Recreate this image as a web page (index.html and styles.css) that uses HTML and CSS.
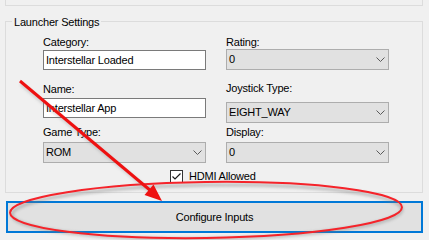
FILE: index.html
```html
<!DOCTYPE html>
<html>
<head>
<meta charset="utf-8">
<link rel="stylesheet" href="styles.css">
</head>
<body>
<div class="topbox"></div>
<fieldset class="group">
  <legend class="group-title">Launcher Settings</legend>
  <div class="group-body">
    <div class="cols">
      <div class="col">
        <div class="lbl l1">Category:</div>
        <div class="textbox t1">Interstellar Loaded</div>
        <div class="lbl l2">Name:</div>
        <div class="textbox t2">Interstellar App</div>
        <div class="lbl l3">Game Type:</div>
        <div class="combo c3"><span>ROM</span><svg class="chev" width="9" height="5" viewBox="0 0 9 5"><path d="M0.5 0.5 L4.5 4.5 L8.5 0.5" fill="none" stroke="#5a5a5a" stroke-width="1"/></svg></div>
      </div>
      <div class="col">
        <div class="lbl r1">Rating:</div>
        <div class="combo rc1"><span>0</span><svg class="chev" width="9" height="5" viewBox="0 0 9 5"><path d="M0.5 0.5 L4.5 4.5 L8.5 0.5" fill="none" stroke="#5a5a5a" stroke-width="1"/></svg></div>
        <div class="lbl r2">Joystick Type:</div>
        <div class="combo rc2"><span>EIGHT_WAY</span><svg class="chev" width="9" height="5" viewBox="0 0 9 5"><path d="M0.5 0.5 L4.5 4.5 L8.5 0.5" fill="none" stroke="#5a5a5a" stroke-width="1"/></svg></div>
        <div class="lbl r3">Display:</div>
        <div class="combo rc3"><span>0</span><svg class="chev" width="9" height="5" viewBox="0 0 9 5"><path d="M0.5 0.5 L4.5 4.5 L8.5 0.5" fill="none" stroke="#5a5a5a" stroke-width="1"/></svg></div>
      </div>
    </div>
    <div class="checkrow">
      <span class="checkbox"><svg width="11" height="11" viewBox="0 0 11 11"><path d="M1.5 5.5 L4 8 L9.5 2.5" fill="none" stroke="#1a1a1a" stroke-width="1.2"/></svg></span>
      <span class="checklabel">HDMI Allowed</span>
    </div>
  </div>
</fieldset>
<div class="button">Configure Inputs</div>
<svg class="annot" width="429" height="240" viewBox="0 0 429 240">
  <defs>
    <filter id="sh" x="-10%" y="-50%" width="120%" height="200%">
      <feGaussianBlur stdDeviation="1.5"/>
    </filter>
  </defs>
  <ellipse cx="207" cy="212" rx="195" ry="27" fill="none" stroke="#7a7a7a" stroke-width="3" opacity="0.45" filter="url(#sh)" transform="rotate(-0.8 207 212)"/>
  <ellipse cx="206" cy="210" rx="196" ry="28" fill="none" stroke="#f5232a" stroke-width="2" transform="rotate(-0.8 206 210)"/>
  <line x1="21" y1="84" x2="152" y2="193" stroke="#888" stroke-width="3" opacity="0.35" filter="url(#sh)"/>
  <line x1="20" y1="81" x2="151" y2="191" stroke="#ee1111" stroke-width="3"/>
  <polygon points="162,201 144.5,195 153.5,184.5" fill="#ee1111"/>
</svg>
</body>
</html>
```
FILE: styles.css
```css
html, body {
  margin: 0;
  padding: 0;
}
body {
  position: relative;
  width: 429px;
  height: 240px;
  overflow: hidden;
  background: #f0f0f0;
  font-family: "Liberation Sans", Arial, sans-serif;
  font-size: 11px;
  letter-spacing: -0.2px;
  color: #000;
}
.topbox {
  box-sizing: border-box;
  height: 6px;
  margin: 0 6px 0 5px;
  border: 1px solid #dcdcdc;
  border-top: none;
}
.group {
  box-sizing: border-box;
  margin: 8px 6px 0 5px;
  padding: 0;
  border: 1px solid #dcdcdc;
  min-width: 0;
}
.group-title {
  margin-left: 6px;
  padding: 2px 2px 0 2px;
  line-height: 13px;
}
.group-body {
  padding: 7px 0 9px 37px;
}
.cols {
  display: flex;
  gap: 20px;
}
.col {
  width: 163px;
  display: flex;
  flex-direction: column;
}
.lbl {
  line-height: 13px;
  height: 13px;
  white-space: nowrap;
}
.textbox {
  box-sizing: border-box;
  height: 20px;
  line-height: 18px;
  padding-left: 2px;
  background: #fff;
  border: 1px solid #7a7a7a;
  white-space: nowrap;
  overflow: hidden;
}
.combo {
  box-sizing: border-box;
  height: 21px;
  display: flex;
  align-items: center;
  justify-content: space-between;
  padding-left: 2px;
  background: #e1e1e1;
  border: 1px solid #adadad;
  white-space: nowrap;
}
.combo span {
  line-height: 13px;
}
.chev {
  display: block;
  margin-right: 3px;
}
.t1 { margin-top: 1px; }
.l2 { margin-top: 13px; }
.t2 { margin-top: 2px; }
.l3 { margin-top: 8px; }
.c3 { margin-top: 3px; }
.rc1 { margin-top: 0; }
.r2 { margin-top: 12px; }
.rc2 { margin-top: 7px; }
.r3 { margin-top: 3px; }
.rc3 { margin-top: 3px; }
.checkrow {
  display: flex;
  align-items: center;
  gap: 6px;
  margin-top: 7px;
  margin-left: 127px;
  height: 13px;
}
.checkbox {
  box-sizing: border-box;
  width: 13px;
  height: 13px;
  border: 1px solid #333;
  background: #fff;
  display: block;
}
.checkbox svg {
  display: block;
}
.checklabel {
  line-height: 13px;
}
.button {
  box-sizing: border-box;
  margin: 8px 6px 0 6px;
  height: 32px;
  border: 2px solid #0078d7;
  background: #e1e1e1;
  display: flex;
  align-items: center;
  justify-content: center;
  line-height: 13px;
  padding-top: 1px;
}
.annot {
  position: absolute;
  left: 0;
  top: 0;
  pointer-events: none;
}
```
